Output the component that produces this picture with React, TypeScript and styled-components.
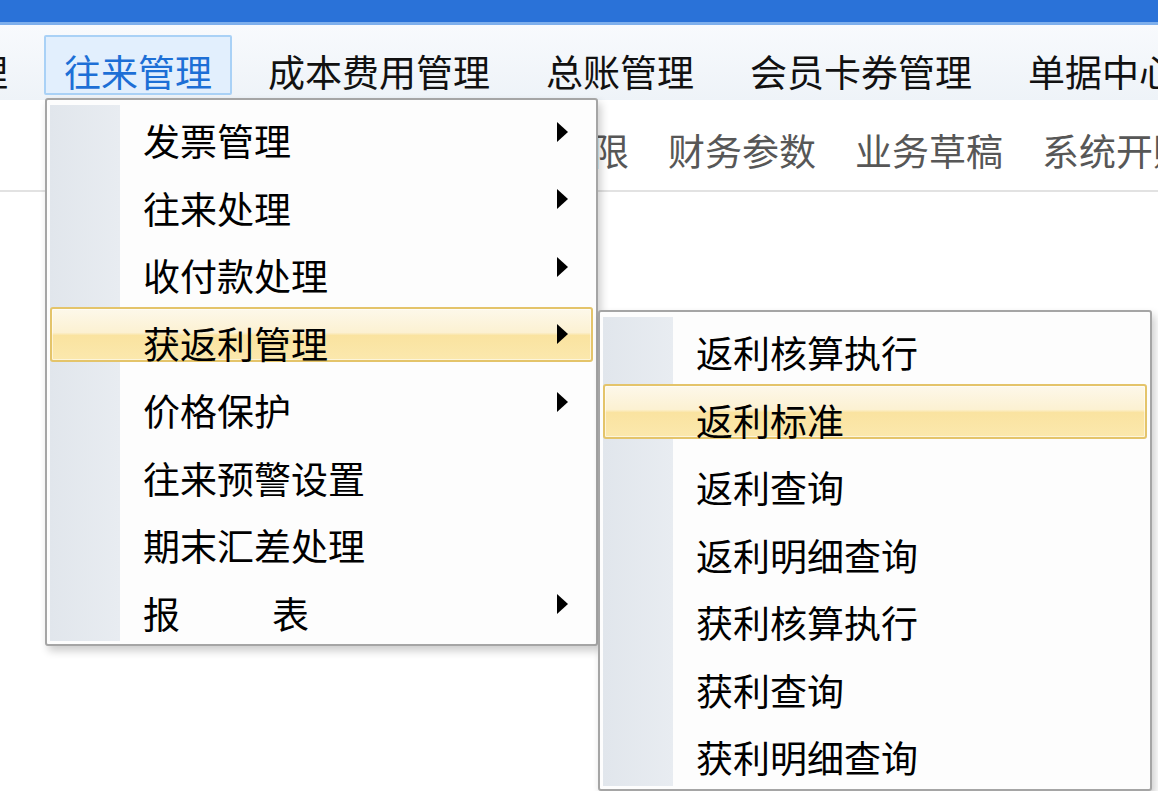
import React from "react";
import styled, { createGlobalStyle, css } from "styled-components";

const GlobalStyle = createGlobalStyle`
  html, body {
    margin: 0;
    padding: 0;
    background: #fff;
    overflow: hidden;
  }
  body {
    font-family: "Noto Sans CJK SC", "Noto Sans", sans-serif;
  }
`;

const Screen = styled.div`
  position: relative;
  width: 1158px;
  height: 791px;
  overflow: hidden;
  background: #fff;
`;

const TitleBar = styled.div`
  height: 22px;
  background: #2a72d8;
  border-bottom: 3px solid #7eafec;
`;

const MenuBar = styled.div`
  height: 75px;
  box-sizing: border-box;
  padding-top: 10px;
  background: linear-gradient(#f8fafd, #eef3f8);
  overflow: hidden;
`;

const Nav = styled.div`
  display: flex;
  gap: 16px;
  margin-left: -160px;
`;

const NavItem = styled.div<{ $active?: boolean }>`
  height: 60px;
  box-sizing: border-box;
  padding: 15px 18px 0;
  border: 2px solid transparent;
  border-radius: 2px;
  font-size: 37px;
  line-height: 38px;
  color: #111;
  white-space: nowrap;

  ${(p) =>
    p.$active &&
    css`
      background: #e2effd;
      border-color: #a9d1f6;
      color: #1d6fd6;
    `}
`;

const ToolRow = styled.div`
  height: 92px;
  box-sizing: border-box;
  padding-top: 31px;
  border-bottom: 2px solid #e2e2e2;
  background: #fff;
  overflow: hidden;
`;

const Tools = styled.div`
  display: flex;
  gap: 39px;
  margin-left: 107px;
`;

const Tool = styled.span`
  font-size: 37px;
  line-height: 38px;
  color: #575757;
  white-space: nowrap;
`;

const Popup = styled.div<{ $x: number; $y: number; $w: number }>`
  position: absolute;
  left: ${(p) => p.$x}px;
  top: ${(p) => p.$y}px;
  width: ${(p) => p.$w}px;
  box-sizing: border-box;
  padding: 4px 3px 0;
  border: 2px solid #a5a5a5;
  border-radius: 3px;
  background-color: #fdfdfd;
  background-image: linear-gradient(90deg, #e1e6ec, #e8ecf1);
  background-repeat: no-repeat;
  background-size: 70px calc(100% - 8px);
  background-position: 3px 5px;
  box-shadow: 3px 5px 8px rgba(0, 0, 0, 0.2);
`;

const Item = styled.div<{ $hot?: boolean }>`
  display: flex;
  align-items: flex-start;
  height: 55px;
  margin-bottom: 12.5px;
  box-sizing: border-box;
  padding: 0 23px 0 91px;
  border: 2px solid transparent;
  border-radius: 3px;

  ${(p) =>
    p.$hot &&
    css`
      border-color: #e4c46a;
      box-shadow: inset 0 0 0 1px rgba(255, 255, 255, 0.55);
      background: linear-gradient(
        #fdf8ea 0%,
        #fcf1d2 46%,
        #fae3a0 52%,
        #fbe8ad 100%
      );
    `}
`;

const Label = styled.span<{ $spread?: number }>`
  flex: 1;
  padding-top: 15px;
  font-size: 37px;
  line-height: 38px;
  color: #000;
  white-space: nowrap;
  letter-spacing: ${(p) => p.$spread ?? 0}px;
`;

const Arrow = styled.i`
  align-self: center;
  width: 0;
  height: 0;
  border-left: 11px solid #000;
  border-top: 10px solid transparent;
  border-bottom: 10px solid transparent;
`;

const navItems = ["系统管理", "往来管理", "成本费用管理", "总账管理", "会员卡券管理", "单据中心"];
const tools = ["基础设置", "期初建账", "操作权限", "财务参数", "业务草稿", "系统开账"];

const mainMenu = [
  { label: "发票管理", sub: true },
  { label: "往来处理", sub: true },
  { label: "收付款处理", sub: true },
  { label: "获返利管理", sub: true, hot: true },
  { label: "价格保护", sub: true },
  { label: "往来预警设置" },
  { label: "期末汇差处理" },
  { label: "报表", sub: true, spread: 92 },
];

const rebateMenu = [
  { label: "返利核算执行" },
  { label: "返利标准", hot: true },
  { label: "返利查询" },
  { label: "返利明细查询" },
  { label: "获利核算执行" },
  { label: "获利查询" },
  { label: "获利明细查询" },
];

type Entry = { label: string; sub?: boolean; hot?: boolean; spread?: number };

const MenuList = ({ entries }: { entries: Entry[] }) => (
  <>
    {entries.map((e) => (
      <Item key={e.label} $hot={e.hot}>
        <Label $spread={e.spread}>{e.label}</Label>
        {e.sub && <Arrow />}
      </Item>
    ))}
  </>
);

export default function App() {
  return (
    <Screen>
      <GlobalStyle />
      <TitleBar />
      <MenuBar>
        <Nav>
          {navItems.map((n) => (
            <NavItem key={n} $active={n === "往来管理"}>
              {n}
            </NavItem>
          ))}
        </Nav>
      </MenuBar>
      <ToolRow>
        <Tools>
          {tools.map((t) => (
            <Tool key={t}>{t}</Tool>
          ))}
        </Tools>
      </ToolRow>

      <Popup $x={45} $y={98} $w={553}>
        <MenuList entries={mainMenu} />
      </Popup>
      <Popup $x={598} $y={310} $w={554}>
        <MenuList entries={rebateMenu} />
      </Popup>
    </Screen>
  );
}
